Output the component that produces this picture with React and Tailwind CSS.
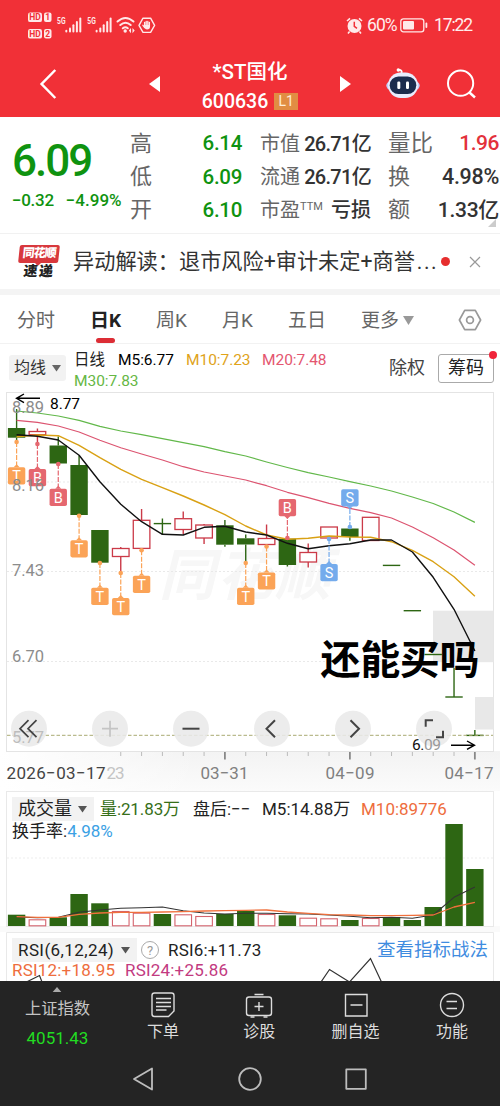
const STEP = 20.83;
const cx = (i) => 16.6 + STEP * i;

const GREEN = "#2d6613";
const RED = "#cb3a48";

// [type, bodyTop, bodyBottom, wickTop, wickBottom]
const candles = [
    ["down", 428, 437.7, 409, 441],
    ["up", 431.5, 434.7, 428.5, 443],
    ["down", 445.5, 463.5, 436.5, 463.5],
    ["down", 465, 515, 455.5, 515],
    ["down", 530, 562.7, 530, 562.7],
    ["up", 548.5, 556.5, 547, 572],
    ["up", 520.3, 548.4, 509, 549],
    ["flat", 523.6, 523.6, 518.5, 535],
    ["up", 518.7, 529.5, 511.5, 534],
    ["up", 525, 538, 524, 544],
    ["down", 525.3, 544.7, 520, 546.7],
    ["down", 538.3, 544.5, 534.5, 562],
    ["up", 538.5, 544.5, 524.5, 546],
    ["down", 538.7, 565, 538.7, 566.5],
    ["up", 552.5, 562, 543.5, 567.5],
    ["up", 527, 538, 527, 538],
    ["down", 528.5, 537, 528.5, 540.7],
    ["up", 517.3, 540.5, 517, 541],
    ["flat", 565.4, 565.4, 565.4, 565.4],
    ["flat", 610.7, 610.7, 610.7, 610.7],
    ["flat", 654.5, 654.5, 654.5, 654.5],
    ["flat", 697, 697, 668, 697],
    ["flat", 735.4, 735.4, 730, 735.4],
];

// trade markers: index, letter, dot y, badge top
const marks = [
    [0, "T", 442, 467.3],
    [1, "B", 444, 469],
    [2, "B", 464, 488.8],
    [3, "T", 515.7, 540.2],
    [4, "T", 563, 587.8],
    [5, "T", 573, 598],
    [6, "T", 550.3, 575.8],
    [11, "T", 563, 587.8],
    [12, "T", 546.5, 572.4],
    [13, "B", 538, 499],
    [15, "S", 539, 564],
    [16, "S", 527, 489.2],
];

const markColor = { T: "#fba357", B: "#e5676f", S: "#74abec" };

const ma5 = [434.7, 436.3, 440, 455.3, 481.7, 504.3, 521.7, 534.3, 535, 527.3, 526.3, 532, 535, 543.3, 548.7, 545.7, 543.7, 540, 540, 552, 577.3, 609.3, 651];
const ma10 = [436.7, 435, 435.7, 445.3, 457.7, 469.3, 479.3, 487.7, 496, 505, 514.7, 526, 535, 539.3, 538.3, 536, 537, 537.3, 541.7, 550.3, 561.7, 576.7, 596.3];
const ma20 = [420.3, 422.3, 426, 432, 440.3, 447.7, 454, 460, 466.7, 472, 476, 480, 485.7, 492.3, 497.7, 503.3, 508.3, 512.7, 518, 527, 537.7, 550, 565.3];
const ma30 = [411, 413, 416, 420.3, 426.3, 431, 434.7, 438.7, 442.7, 446.7, 451.7, 456, 462, 467.5, 472.7, 477, 481.6, 486, 491, 497, 503.5, 512, 522.4];

// [top, isUp]
const volumes = [
    [914.7], [919.3, 1], [917.3], [894], [903.3], [911, 1], [912.7, 1], [914], [914.3, 1], [916, 1], [914], [911],
    [914, 1], [915.3], [917.7, 1], [918.3, 1], [920], [918, 1], [917], [920], [907], [824], [869],
];
const vol5 = [917, 917.7, 917.3, 912.3, 910, 908.3, 907.7, 907, 910.7, 913, 914, 913.3, 913.3, 913.7, 914, 915, 916.3, 917.7, 917.3, 918.3, 915, 897.3, 887];
const vol10 = [916.7, 917.3, 917.3, 914.3, 913, 912.3, 912.3, 912, 911.7, 911, 910.7, 910.3, 910, 912, 913.3, 914.7, 915, 915.7, 915.7, 915.3, 915, 907, 902.3];

const points = (ys) => ys.map((y, i) => `${cx(i).toFixed(1)},${y}`).join(" ");

function Line({ ys, color, width = 1.2 }) {
    return <polyline points={points(ys)} fill="none" stroke={color} strokeWidth={width} strokeLinejoin="round" />;
}

function Candle({ i, data }) {
    const [type, top, bottom, high, low] = data;
    const x = cx(i);
    const color = type === "up" ? RED : GREEN;
    return (
        <g stroke={color} strokeWidth="1.4">
            {high < top && <line x1={x} x2={x} y1={high} y2={top} />}
            {low > bottom && <line x1={x} x2={x} y1={bottom} y2={low} />}
            {type === "flat" && <line x1={x - 8.7} x2={x + 8.7} y1={top} y2={top} />}
            {type === "down" && <rect x={x - 8.7} y={top} width="17.4" height={bottom - top} fill={color} stroke="none" />}
            {type === "up" && <rect x={x - 8.3} y={top} width="16.6" height={bottom - top} fill="#fff" strokeWidth="1.3" />}
        </g>
    );
}

function Mark({ i, letter, dot, top }) {
    const x = cx(i);
    const color = markColor[letter];
    const above = top < dot;
    const edge = above ? top + 17 : top;
    return (
        <g fill={color}>
            <line x1={x} x2={x} y1={dot} y2={edge} stroke={color} strokeWidth="1.2" strokeDasharray="5 1.5" />
            <circle cx={x} cy={dot} r="2.3" />
            <path d={above ? `M${x - 3} ${edge}h6l-3 3z` : `M${x - 3} ${edge}h6l-3-3z`} />
            <rect x={x - 8.7} y={top} width="17.4" height="17.2" rx="1.8" />
            <text x={x} y={top + 13.8} fill="#fff" fontSize="14.5" textAnchor="middle">{letter}</text>
        </g>
    );
}

function ToolButton({ x, children, muted }) {
    return (
        <g transform={`translate(${x} 728.7)`} fill="none" stroke={muted ? "#c4c4c4" : "#444"} strokeWidth="1.7">
            <circle r="18" fill="#e9e9e9" fillOpacity="0.88" stroke="none" />
            {children}
        </g>
    );
}

function StatusBar() {
    return (
        <div className="flex h-[50px] items-center justify-between pl-[27px] pr-[28px] text-white">
            <svg width="130" height="30" viewBox="27 10 130 30" fill="#ffe9e9">
                {[12.5, 29].map((y, i) => (
                    <g key={y}>
                        <rect x="28" y={y} width="14" height="9.6" rx="2.2" />
                        <rect x="44" y={y} width="7.5" height="9.6" rx="2" />
                        <text x="35" y={y + 7.8} fill="#f13037" fontSize="8.5" fontWeight="700" textAnchor="middle">HD</text>
                        <text x="47.8" y={y + 7.8} fill="#f13037" fontSize="8.5" fontWeight="700" textAnchor="middle">{i + 1}</text>
                    </g>
                ))}
                {[57, 87.3].map((x) => (
                    <g key={x}>
                        <text x={x} y="24.3" fontSize="9.5" fontWeight="700" textLength="8.5" lengthAdjust="spacingAndGlyphs">5G</text>
                        <rect x={x + 8.3} y="29.8" width="2" height="2.6" rx="1" />
                        <rect x={x + 12} y="27.5" width="2" height="4.9" rx="1" />
                        <rect x={x + 15.4} y="24.3" width="2" height="8.1" rx="1" />
                        <rect x={x + 18.9} y="21" width="2" height="11.4" rx="1" />
                        <rect x={x + 22.3} y="17.5" width="2" height="14.9" rx="1" />
                    </g>
                ))}
                <g fill="none" stroke="#ffe9e9" strokeWidth="2" strokeLinecap="round">
                    <path d="M117.5 21.5q8-7 16 0M120.3 25q5.2-4.5 10.4 0M122.8 28.3q2.7-2 5 0" />
                </g>
                <circle cx="125.2" cy="31" r="1.7" />
                <path d="M131 28l-2.2 2.6 2.2 2.6zM132.5 28l2.2 2.6-2.2 2.6z" />
                <path d="M143 18.2h7.600l4 7.100-4 7.100H143l-4-7.100z" fill="none" stroke="#ffe9e9" strokeWidth="1.400" strokeLinejoin="round" />
                <g stroke="#ffe9e9" strokeWidth="1.300" strokeLinecap="round">
                    <path d="M144.600 22.300v4M146.200 21.300v4M147.800 21.300v4M149.400 22.300v4M142.900 25.300l1.800 2.200" />
                </g>
                <path d="M144 25h6v1.800q0 2.700-3 2.700-1.700 0-2.700-2z" />
            </svg>
            <div className="flex items-center text-[18px] text-[#ffecec]">
                <svg width="17" height="17" viewBox="0 0 17 17" className="mr-1">
                    <circle cx="8.5" cy="9" r="7" fill="#ffe9e9" />
                    <path d="M1 4l3-2.7M16 4l-3-2.7M3.6 14.5l-1.6 2M13.4 14.5l1.6 2" stroke="#ffe9e9" strokeWidth="1.6" />
                    <path d="M8.3 4.7V9.3l2.7 2" stroke="#f13037" strokeWidth="1.5" fill="none" />
                </svg>
                <span className="w-[33px] text-[17.500px] tracking-[-0.9px]">60%</span>
                <svg width="28" height="15" viewBox="0 0 28 15">
                    <rect x=".8" y=".8" width="23" height="13" rx="2.6" fill="none" stroke="#ffe9e9" strokeWidth="1.3" />
                    <rect x="3" y="3" width="11" height="8.6" rx="1" fill="#ffe9e9" />
                    <rect x="25.5" y="4.6" width="1.8" height="5.4" rx=".9" fill="#ffe9e9" />
                </svg>
                <span className="ml-[6px] w-[38px] whitespace-nowrap text-[17.500px] tracking-[-1.100px]">17:22</span>
            </div>
        </div>
    );
}

function TitleBar() {
    return (
        <div className="flex h-[67px] items-center text-white">
            <svg width="20" height="32" viewBox="0 0 20 32" className="ml-[39px] shrink-0">
                <path d="M16.3 2L2.6 16l13.7 14" fill="none" stroke="#fff" strokeWidth="2.5" />
            </svg>
            <svg width="12" height="18" viewBox="0 0 12 18" className="ml-[89px] shrink-0">
                <path d="M12 1v16L1 9z" fill="#fff" />
            </svg>
            <div className="flex w-[180px] flex-col items-center pt-[7px]">
                <div className="h-[29px] text-[20.5px] font-medium leading-[27px]">*ST国化</div>
                <div className="flex h-[28px] items-center gap-[6px]">
                    <span className="text-[19.5px] font-medium leading-none">600636</span>
                    <span className="h-[17px] w-[24px] bg-[#e18d43] text-center text-[14px] leading-[17px] text-[#ffedd8]">L1</span>
                </div>
            </div>
            <svg width="12" height="18" viewBox="0 0 12 18" className="shrink-0">
                <path d="M0 1v16l11-8z" fill="#fff" />
            </svg>
            <svg width="36" height="34" viewBox="0 0 36 34" className="ml-[33px] shrink-0">
                <path d="M16.500 6q1-3-2.500-3" fill="none" stroke="#fff" strokeWidth="1.8" />
                <circle cx="13.3" cy="3" r="1.7" fill="#fff" />
                <ellipse cx="18" cy="18.500" rx="16.700" ry="7.500" fill="#c3cdf7" />
                <rect x="3" y="5.500" width="30" height="25.500" rx="12.700" fill="#e9ecfd" />
                <rect x="4.700" y="9.500" width="26.600" height="17.500" rx="8.700" fill="#1c2c4d" />
                <rect x="12.3" y="14.5" width="3" height="7.5" rx="1.2" fill="#fff" />
                <rect x="21" y="14.5" width="3" height="7.5" rx="1.2" fill="#fff" />
            </svg>
            <svg width="32" height="32" viewBox="0 0 32 32" className="ml-[25px] shrink-0" fill="none" stroke="#fff" strokeWidth="2">
                <circle cx="14.6" cy="15.2" r="12.6" />
                <path d="M23.5 24.5l5.5 5" strokeWidth="2.4" />
            </svg>
        </div>
    );
}

function Stat({ label, value, sup, labelClass, valueClass }) {
    return (
        <div className="flex h-[33.3px] items-center justify-between whitespace-nowrap leading-none">
            <span className={`text-[#666] ${labelClass}`}>
                {label}
                {sup && <sup className="-top-[7px] text-[11px] leading-none">{sup}</sup>}
            </span>
            <span className={`font-medium ${valueClass}`}>{value}</span>
        </div>
    );
}

function Quote() {
    const g = "text-[20.5px] text-[#0f9310] tracking-[-0.3px]";
    const mid = "text-[20px] tracking-[-0.7px] text-[#333]";
    return (
        <div className="relative flex h-[116px] pt-[10px]">
            <div className="w-[130px] shrink-0 pl-[12px] text-[#0f9310]">
                <div className="mt-[10px] h-[48px] text-[44px] font-medium leading-[48px] tracking-[-2px]">6.09</div>
                <div className="flex gap-[12px] whitespace-nowrap pt-[4px] text-[17px] font-medium leading-[22px]">
                    <span className="tracking-[-0.3px]">−0.32</span>
                    <span>−4.99%</span>
                </div>
            </div>
            <div className="w-[112px]">
                <Stat label="高" value="6.14" labelClass="text-[22px]" valueClass={g} />
                <Stat label="低" value="6.09" labelClass="text-[22px]" valueClass={g} />
                <Stat label="开" value="6.10" labelClass="text-[22px]" valueClass={g} />
            </div>
            <div className="ml-[18px] w-[111px]">
                <Stat label="市值" value="26.71亿" labelClass="text-[20px]" valueClass={mid} />
                <Stat label="流通" value="26.71亿" labelClass="text-[20px]" valueClass={mid} />
                <Stat label="市盈" sup="TTM" value="亏损" labelClass="text-[20px]" valueClass="text-[20px] text-[#333]" />
            </div>
            <div className="ml-[17px] w-[111px]">
                <Stat label="量比" value="1.96" labelClass="text-[22.5px]" valueClass="text-[21px] tracking-[-0.5px] text-[#e3313b]" />
                <Stat label="换" value="4.98%" labelClass="text-[22px]" valueClass="text-[21.5px] tracking-[-0.3px] text-[#333]" />
                <Stat label="额" value="1.33亿" labelClass="text-[22px]" valueClass="text-[21px] tracking-[-0.3px] text-[#333]" />
            </div>
            <svg width="8" height="8" className="absolute bottom-[6px] right-[4px]"><path d="M8 0v8H0z" fill="#ccc" /></svg>
        </div>
    );
}

function News() {
    return (
        <div className="flex h-[56px] items-center border-t border-[#f1f1f1]">
            <div className="ml-[18px] w-[42px] shrink-0">
                <div className="relative mx-auto h-[18px] w-[40px] -skew-x-6 rounded-[2px] bg-[#d8383d] text-center text-[12px] font-black leading-[17px] tracking-[-1px] text-white">
                    同花顺
                    <svg width="8" height="4" className="absolute -bottom-[3px] left-[16px]"><path d="M0 0h8L4 4z" fill="#d8383d" /></svg>
                </div>
                <div className="h-[16px] -skew-x-6 text-center text-[14px] font-black leading-[16px] tracking-[1.5px] text-[#222]">速递</div>
            </div>
            <div className="ml-[13px] w-[366px] shrink-0 whitespace-nowrap pt-px text-[21.200px] text-[#333]">
                异动解读：退市风险+审计未定+商誉<span className="ml-[2px] tracking-[1.500px]">...</span>
            </div>
            <span className="ml-[2px] size-[9px] shrink-0 rounded-full bg-[#e62e2e]" />
            <svg width="12" height="12" viewBox="0 0 12 12" className="ml-[19px]" stroke="#999" strokeWidth="1.2">
                <path d="M1 1l10 10M11 1L1 11" />
            </svg>
        </div>
    );
}

function Tabs() {
    return (
        <div className="flex h-[49px] items-center border-b border-[#f2f2f2] pt-[2px] text-[19px] leading-none text-[#666]">
            <span className="ml-[17px] w-[73px]">分时</span>
            <span className="relative w-[66px] font-bold text-[#222]">
                日K
                <i className="absolute left-[6px] top-[27px] h-[5px] w-[19px] rounded-full bg-[#dc2d35]" />
            </span>
            <span className="w-[66px]">周K</span>
            <span className="w-[66px]">月K</span>
            <span className="w-[73px]">五日</span>
            <span>更多</span>
            <svg width="11" height="9" className="ml-[4px]"><path d="M0 0h11L5.5 9z" fill="#999" /></svg>
            <svg width="24" height="22" viewBox="0 0 24 22" className="ml-[44px]" fill="none" stroke="#999" strokeWidth="1.7">
                <path d="M6.7 1.3h10.6L22.6 11l-5.3 9.7H6.7L1.4 11z" strokeLinejoin="round" />
                <circle cx="12" cy="11" r="3.4" />
            </svg>
        </div>
    );
}

function Legend() {
    return (
        <div className="flex h-[48px] items-center text-[16px] leading-none">
            <div className="ml-[9px] flex h-[26px] w-[57px] items-center gap-[6px] rounded-[3px] bg-[#f2f2f2] pl-[5px] text-[16px] text-[#333]">
                均线
                <svg width="9" height="7"><path d="M0 0h9L4.5 6.5z" fill="#666" /></svg>
            </div>
            <div className="ml-[8px] w-[315px] whitespace-nowrap pt-[5px] text-[15.5px] leading-[20.500px] tracking-[-0.05px]">
                <div className="flex">
                    <span className="w-[44px] text-[#222]">日线</span>
                    <span className="w-[68px] text-black">M5:6.77</span>
                    <span className="w-[76px] text-[#e0a31a]">M10:7.23</span>
                    <span className="text-[#e4566f]">M20:7.48</span>
                </div>
                <div className="text-[#66b745]">M30:7.83</div>
            </div>
            <span className="w-[49px] whitespace-nowrap text-[18px] text-[#444]">除权</span>
            <div className="relative flex h-[29px] w-[56px] items-center justify-center rounded-[3px] border border-[#aaa] text-[18px] text-[#222]">
                筹码
                <i className="absolute -right-[4px] -top-[4px] size-[8px] rounded-full bg-[#f0243a]" />
            </div>
        </div>
    );
}

function KChart() {
    return (
        <svg width="500" height="399" viewBox="0 392 500 399" className="block">
            <defs>
                <linearGradient id="axis" x1="0" y1="0" x2="0" y2="1">
                    <stop offset="0" stopColor="#f3f3f3" />
                    <stop offset="1" stopColor="#fbfbfb" />
                </linearGradient>
                <linearGradient id="fade" x1="0" y1="0" x2="1" y2="0">
                    <stop offset="0" stopColor="#fff" />
                    <stop offset="1" stopColor="#fff" stopOpacity="0" />
                </linearGradient>
            </defs>
            <rect x="0" y="751" width="500" height="40" fill="url(#axis)" />
            <rect x="0" y="751" width="200" height="40" fill="url(#fade)" />
            <rect x="6.5" y="392.5" width="487" height="359" fill="#fff" stroke="#e4e4e4" />
            <text x="159" y="595" fontSize="56" fontWeight="700" fill="#f7f7f7" textLength="172" fontStyle="italic">同花顺</text>
            {[482, 571.5, 661.5].map((y) => (
                <line key={y} x1="7" x2="493" y1={y} y2={y} stroke="#e9e9e9" strokeDasharray="2 2" />
            ))}
            <rect x="433" y="610.7" width="60.5" height="51.5" fill="#e8e8e8" />
            <rect x="475" y="697" width="18.5" height="32.5" fill="#e8e8e8" />

            {candles.map((c, i) => <Candle key={i} i={i} data={c} />)}
            <Line ys={ma30} color="#62b84a" />
            <Line ys={ma20} color="#dc5470" />
            <Line ys={ma10} color="#d9a114" width={1.4} />
            <Line ys={ma5} color="#111" width={1.4} />
            {marks.map(([i, letter, dot, top]) => <Mark key={i} i={i} letter={letter} dot={dot} top={top} />)}

            <g fontSize="16.5" fill="#8c8c8c">
                <text x="12" y="413" textLength="32">8.89</text>
                <text x="12" y="490.5" textLength="32">8.16</text>
                <text x="12" y="575.7" textLength="32">7.43</text>
                <text x="12" y="661.7" textLength="32">6.70</text>
            </g>
            <path d="M40 398.3H17M24 394l-7.5 4.3 7.5 4.3" fill="none" stroke="#000" strokeWidth="1.4" />
            <text x="50" y="408.5" fontSize="15.5" textLength="30">8.77</text>

            <line x1="7" x2="493" y1="735.3" y2="735.3" stroke="#a9ab72" strokeDasharray="3.5 2" />
            <path d="M451 745.2h23M467 741l7.5 4.2-7.5 4.2" fill="none" stroke="#000" strokeWidth="1.4" />
            <ToolButton x={29}>
                <text x="-17" y="14.300" fontSize="16.500" textLength="32" fill="#bdbdbd" stroke="none">5.77</text>
                <path d="M-.5-8.5L-9 0l8.500 8.500M7.500-8.500L-1 0l8.500 8.500" />
            </ToolButton>
            <ToolButton x={110} muted><path d="M-8 0H8M0-8V8" /></ToolButton>
            <ToolButton x={191}><path d="M-8.500 0H8.500" strokeWidth="2" /></ToolButton>
            <ToolButton x={272}><path d="M3-8.500L-5.500 0 3 8.500" strokeWidth="2" /></ToolButton>
            <ToolButton x={353}><path d="M-2.500-8.500L6 0l-8.500 8.500" strokeWidth="2" /></ToolButton>
            <ToolButton x={434}>
                <text x="-22" y="21" fontSize="15.500" textLength="29" fill="#111" stroke="none">6.<tspan fill="#999">09</tspan></text>
                <path d="M-8.300-2v-6.500H-1M9 2v6.500H2" strokeWidth="2" />
            </ToolButton>

            {[5, 6, 7, 8, 9, 10, 11, 12, 13, 14, 15, 16, 17, 18, 19, 20, 21, 22].map((i) => {
                const major = i === 10 || i === 16 || i === 22;
                return <line key={i} x1={cx(i)} x2={cx(i)} y1="752" y2={major ? 759.5 : 756} stroke={major ? "#888" : "#bbb"} strokeWidth={major ? 1.8 : 1} />;
            })}
            <g fontSize="17" fill="#808080">
                <text x="106.5" y="778.5" textLength="18" fill="#c4c4c4">23</text>
                <text x="6.5" y="778.5" textLength="99" fill="#444">2026−03−17</text>
                <text x="200.5" y="778.5" textLength="48">03−31</text>
                <text x="325.5" y="778.5" textLength="49">04−09</text>
                <text x="444.5" y="778.5" textLength="49">04−17</text>
            </g>
            <text x="320.5" y="673.5" fontSize="40" fontWeight="700" textLength="159">还能买吗</text>
        </svg>
    );
}

function Picker({ label, className }) {
    return (
        <span className={`flex h-[24px] items-center justify-between bg-[#f2f2f2] pl-[6px] pr-[7px] text-[#222] ${className}`}>
            {label}
            <svg width="9" height="7"><path d="M0 0h9L4.5 6.5z" fill="#555" /></svg>
        </span>
    );
}

function VolumePanel() {
    return (
        <div className="grid h-[141px]">
            <svg width="500" height="141" viewBox="0 791 500 141" className="col-start-1 row-start-1">
                <rect x="0" y="926" width="500" height="6" fill="#fafafa" />
                <rect x="6.5" y="791.5" width="487" height="135" fill="#fff" stroke="#e9e9e9" />
                <line x1="7" x2="493" y1="858" y2="858" stroke="#ededed" strokeDasharray="2 2" />
                {volumes.map(([top, up], i) =>
                    up ? (
                        <rect key={i} x={cx(i) - 8.3} y={top + 0.5} width="16.6" height={925.3 - top} fill="#fff" stroke="#d4636d" strokeWidth="1.1" />
                    ) : (
                        <rect key={i} x={cx(i) - 8.7} y={top} width="17.4" height={926 - top} fill={GREEN} />
                    )
                )}
                <Line ys={vol5} color="#333" width={1.1} />
                <Line ys={vol10} color="#f0703c" width={1.3} />
            </svg>
            <div className="col-start-1 row-start-1 pl-[12px] pt-[6px] text-[17px] leading-none">
                <div className="flex h-[24px] items-center whitespace-nowrap">
                    <Picker label="成交量" className="w-[82px] text-[18px]" />
                    <span className="ml-[6px] w-[93px] tracking-[-0.1px] text-[#376f19]">量:21.83万</span>
                    <span className="w-[69px] text-[#222]">盘后:−−</span>
                    <span className="w-[99px] text-[#222]">M5:14.88万</span>
                    <span className="text-[#ee6d3d]">M10:89776</span>
                </div>
                <div className="pt-px leading-[18px] text-[#222]">换手率:<span className="text-[#3ba1e4]">4.98%</span></div>
            </div>
        </div>
    );
}

function RsiPanel() {
    return (
        <div className="grid h-[49px] overflow-hidden">
            <svg width="500" height="49" viewBox="0 932 500 49" className="col-start-1 row-start-1">
                <path d="M6.5 981V932.5h487V981" fill="#fff" stroke="#e9e9e9" />
                <path d="M26.5 982l13-6.5 2.5 6.5M321 982l8.5-12.5L349.500 982l21-23.500L381.500 982" fill="none" stroke="#333" strokeWidth="1.2" />
            </svg>
            <div className="col-start-1 row-start-1 pl-[12px] pt-[6px] text-[17px] leading-none">
                <div className="flex h-[24px] items-center whitespace-nowrap">
                    <Picker label="RSI(6,12,24)" className="w-[125px] tracking-[0.4px]" />
                    <span className="ml-[4px] flex size-[18px] items-center justify-center rounded-full border border-[#aaa] text-[13px] text-[#999]">?</span>
                    <span className="ml-[9px] tracking-[0.2px] text-[#222]">RSI6:+11.73</span>
                    <span className="ml-auto mr-[12px] text-[18.5px] text-[#3f8ce0]">查看指标战法</span>
                </div>
                <div className="flex leading-[17px] tracking-[0.2px]">
                    <span className="w-[113px] text-[#ee6d3d]">RSI12:+18.95</span>
                    <span className="text-[#c23a80]">RSI24:+25.86</span>
                </div>
            </div>
        </div>
    );
}

function NavItem({ label, children }) {
    return (
        <div className="flex w-[96.3px] flex-col items-center pt-[10px]">
            <svg width="28" height="28" viewBox="-14 -14 28 28" fill="none" stroke="#ddd" strokeWidth="1.4">{children}</svg>
            <span className="text-[16px] leading-[25px] text-[#ddd]">{label}</span>
        </div>
    );
}

function BottomBar() {
    return (
        <div className="h-[125px] bg-[#242424]">
            <div className="flex h-[72px]">
                <div className="flex w-[115px] flex-col items-center pt-[6px]">
                    <svg width="12" height="7"><path d="M6 0l6 7H0z" fill="#aaa" /></svg>
                    <span className="mt-[4px] text-[16.3px] leading-[26px] text-[#c4c4c4]">上证指数</span>
                    <span className="pt-[2px] text-[17px] leading-[29px] text-[#22dc22]">4051.43</span>
                </div>
                <NavItem label="下单">
                    <path d="M-8.5-12h17a2.5 2.5 0 0 1 2.5 2.5V6l-5.500 5.500h-14a2.500 2.500 0 0 1-2.500-2.500V-9.500A2.500 2.500 0 0 1-8.500-12zM-7-6.500H8M-7-2.500H8M-7 1.500H8M-7 5H3.500" />
                </NavItem>
                <NavItem label="诊股">
                    <rect x="-12.5" y="-8" width="25" height="18.5" rx="2.5" />
                    <path d="M-4.500-10.500h9M-8.500 12h4M4.500 12h4M-4.500 1.500h9M0-3V6" />
                </NavItem>
                <NavItem label="删自选">
                    <path d="M-10.500-10.500h21.500V11h-21.500zM-5.500 0h12" />
                </NavItem>
                <NavItem label="功能">
                    <circle r="11.5" />
                    <path d="M-5.500-3.500h10.500M-5.500 3.500h10.500" />
                </NavItem>
            </div>
            <svg width="500" height="53" viewBox="0 1053 500 53" className="block" fill="none" stroke="#bdbdbd" strokeWidth="1.8" strokeLinejoin="round">
                <path d="M152 1068.500v21L134 1079z" />
                <circle cx="250" cy="1079" r="10.8" />
                <rect x="346.3" y="1069.3" width="19.5" height="19.5" />
            </svg>
        </div>
    );
}

export default function App() {
    return (
        <div className="h-[1106px] w-[500px] overflow-hidden bg-white font-['Roboto','Noto_Sans_CJK_SC',sans-serif]">
            <div className="h-[117px] bg-[#f13037]">
                <StatusBar />
                <TitleBar />
            </div>
            <Quote />
            <News />
            <div className="h-[6px] bg-[#f4f4f4]" />
            <Tabs />
            <Legend />
            <KChart />
            <VolumePanel />
            <RsiPanel />
            <BottomBar />
        </div>
    );
}
